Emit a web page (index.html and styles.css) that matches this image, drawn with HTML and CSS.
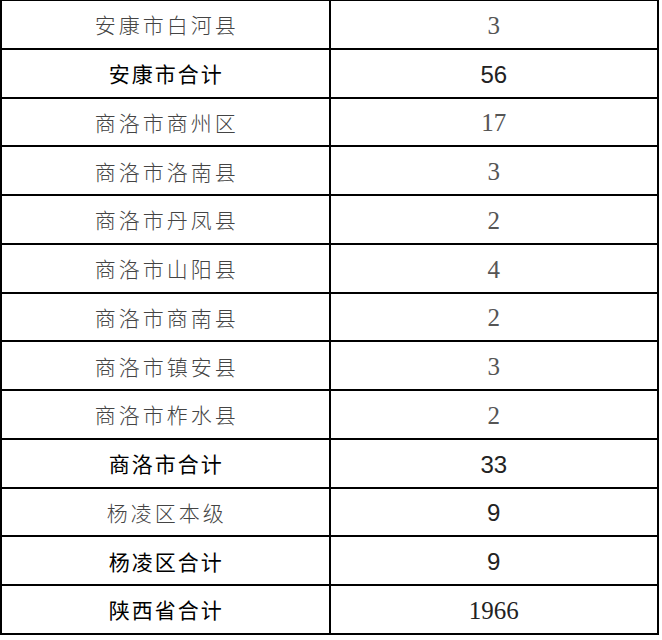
FILE: index.html
```html
<!DOCTYPE html>
<html lang="zh-CN">
<head>
<meta charset="utf-8">
<title>陕西省合计</title>
<link rel="stylesheet" href="styles.css">
</head>
<body>
<table class="stats">
  <tbody>
    <tr><td class="name">安康市白河县</td><td class="num">3</td></tr>
    <tr class="total"><td class="name">安康市合计</td><td class="num">56</td></tr>
    <tr><td class="name">商洛市商州区</td><td class="num">17</td></tr>
    <tr><td class="name">商洛市洛南县</td><td class="num">3</td></tr>
    <tr><td class="name">商洛市丹凤县</td><td class="num">2</td></tr>
    <tr><td class="name">商洛市山阳县</td><td class="num">4</td></tr>
    <tr><td class="name">商洛市商南县</td><td class="num">2</td></tr>
    <tr><td class="name">商洛市镇安县</td><td class="num">3</td></tr>
    <tr><td class="name">商洛市柞水县</td><td class="num">2</td></tr>
    <tr class="total"><td class="name">商洛市合计</td><td class="num">33</td></tr>
    <tr><td class="name">杨凌区本级</td><td class="num sans">9</td></tr>
    <tr class="total"><td class="name">杨凌区合计</td><td class="num">9</td></tr>
    <tr class="total grand"><td class="name">陕西省合计</td><td class="num">1966</td></tr>
  </tbody>
</table>
</body>
</html>
```
FILE: styles.css
```css
html, body {
  margin: 0;
  padding: 0;
  background: #fff;
}

.stats {
  border-collapse: collapse;
  width: 659px;
  margin-top: -1px;
  table-layout: fixed;
}

.stats tr {
  height: 48.75px;
}

.stats td {
  border: 2px solid #000;
  padding: 0;
  text-align: center;
  vertical-align: middle;
  width: 50%;
}

.name {
  font-family: "Noto Sans CJK SC", sans-serif;
  font-weight: 300;
  font-size: 21px;
  letter-spacing: 3px;
  color: #444;
  text-indent: 3px;
  padding-top: 1px;
}

.stats td.num {
  font-family: "Liberation Serif", serif;
  font-size: 25px;
  color: #555;
  padding-top: 3px;
}

.stats td.num.sans {
  font-family: "Liberation Sans", sans-serif;
  font-size: 24px;
  color: #222;
}

.total .name {
  font-weight: 400;
  color: #000;
  letter-spacing: 2px;
  text-indent: 2px;
}

.stats .total td.num {
  font-family: "Liberation Sans", sans-serif;
  font-size: 24px;
  color: #222;
}

.stats .grand td.num {
  font-family: "Liberation Serif", serif;
  font-size: 25px;
  color: #222;
}
```
